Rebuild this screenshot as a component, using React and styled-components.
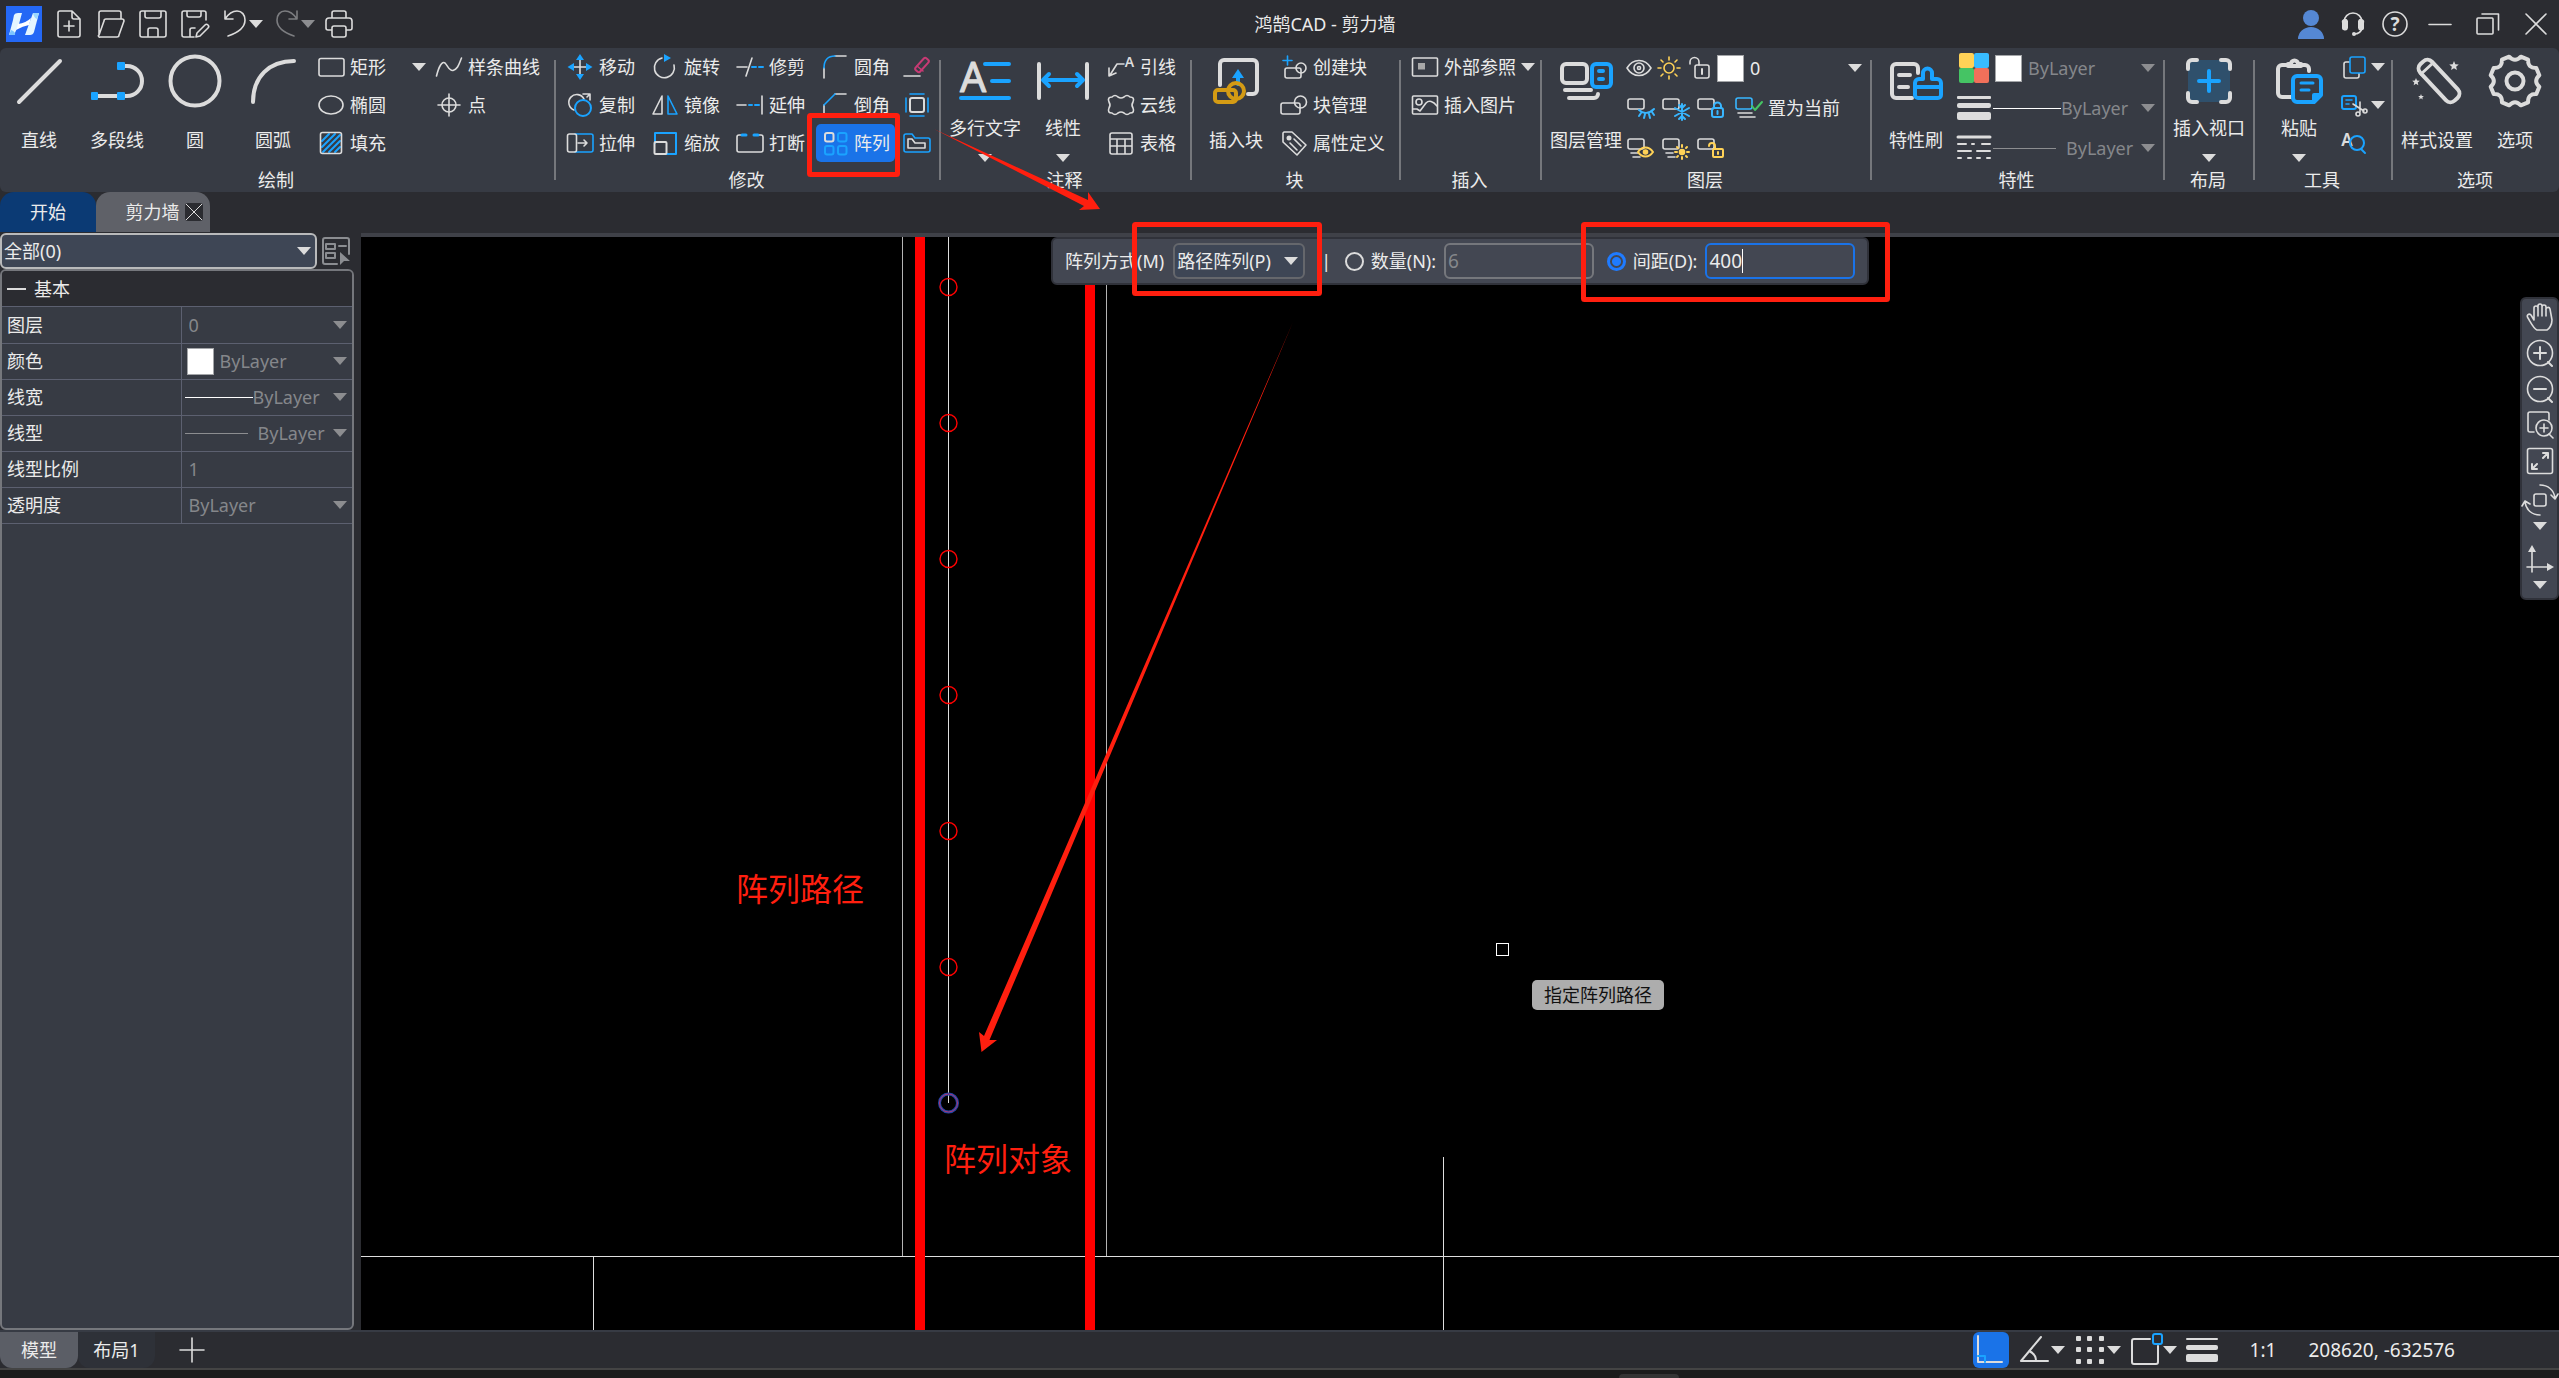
import styled, { createGlobalStyle } from 'styled-components';
import { useState } from 'react';

const light = '#dcdcdc';
const blue = '#1aa3ff';
const yellow = '#ffd257';
const sky = '#38b6ff';
const red = '#ff1f0f';

// ---------- icons, 28px ----------

const layerBox = <rect x="1" y="5" width="16" height="10" rx="2" />;
const layerLines = <path d="M4 19H11M6 23H13" />;

const small = {
    novo: <><path d="M17 1H5a2 2 0 0 0-2 2V25a2 2 0 0 0 2 2H23a2 2 0 0 0 2-2V9ZM17 1V7a2 2 0 0 0 2 2H25M14 11V21M9 16H19" /></>,
    abrir: <path d="M2 25V3a2 2 0 0 1 2-2H22a2 2 0 0 1 2 2V9M2 25L7 11a2 2 0 0 1 2-2H25a2 2 0 0 1 2 2L22 25a2 2 0 0 1-2 2H3a1 1 0 0 1-1-2Z" />,
    salvar: <path d="M3 1H25a2 2 0 0 1 2 2V25a2 2 0 0 1-2 2H3a2 2 0 0 1-2-2V3a2 2 0 0 1 2-2ZM6 1V6a2 2 0 0 0 2 2H20a2 2 0 0 0 2-2V1M9 27V20a2 2 0 0 1 2-2H17a2 2 0 0 1 2 2V27" />,
    salvarComo: <path d="M25 10V3a2 2 0 0 0-2-2H3a2 2 0 0 0-2 2V25a2 2 0 0 0 2 2H13M6 1V5a2 2 0 0 0 2 2H18a2 2 0 0 0 2-2V1M9 27V20a2 2 0 0 1 2-2H14M15 27L16 23L24 15a2 2 0 0 1 3 3L19 26Z" />,
    desfazer: <path d="M4 1V9H12M4 9C8 3 12 1 16 1C21 1 24 5 24 10C24 18 16 23 7 26" />,
    refazer: <path d="M24 1V9H16M24 9C20 3 16 1 12 1C7 1 4 5 4 10C4 18 12 23 21 26" stroke="#7c7d80" />,
    imprimir: <path d="M7 8V3a2 2 0 0 1 2-2H19a2 2 0 0 1 2 2V8M7 20H3a2 2 0 0 1-2-2V11a3 3 0 0 1 3-3H24a3 3 0 0 1 3 3V18a2 2 0 0 1-2 2H21M9 16H19a2 2 0 0 1 2 2V25a2 2 0 0 1-2 2H9a2 2 0 0 1-2-2V18a2 2 0 0 1 2-2Z" />,
    usuario: <g fill="#5588d4" stroke="none"><circle cx="14" cy="8" r="8" /><path d="M1 29a13 12 0 0 1 26 0Z" /></g>,
    fone: <><path d="M5 12a9 9 0 0 1 18 0M23 18C22 23 19 24 15 24" /><path d="M3 13a3 3 0 0 1 6-2V18a3 3 0 0 1-6-1ZM25 13a3 3 0 0 0-6-2V18a3 3 0 0 0 6-1Z" fill={light} stroke="none" /><circle cx="15" cy="24" r="2" fill={light} stroke="none" /></>,
    ajuda: <><circle cx="14" cy="14" r="12" /><text x="14" y="21" textAnchor="middle" fontSize="19" fontWeight="700" fill={light} stroke="none">?</text></>,
    minimizar: <path d="M3 14.5H25" />,
    restaurar: <><rect x="3" y="8" width="16" height="16" rx="1" /><path d="M8 4H24.500V20" /></>,
    fechar: <path d="M4 4L24 24M24 4L4 24" />,
    retangulo: <rect x="2" y="5.500" width="25" height="17.500" rx="2" />,
    elipse: <ellipse cx="14" cy="14" rx="12" ry="9" />,
    hachura: <><path d="M5 12L12 5M5 18L18 5M6 23L23 6M12 23L23 12M18 23L23 18" stroke={blue} strokeWidth="2" /><rect x="3.500" y="3.500" width="21" height="21" rx="2" /></>,
    spline: <path d="M1.500 23C4 13 7 8 10 10C13 13 14 18 18 17.500C23 16 24 11 26.500 5" />,
    ponto: <><circle cx="14" cy="14" r="7" /><path d="M14 3V25M3 14H25" /></>,
    mover: <><path d="M14 6V22M6 14H22" /><path d="M14 1L18 7H10ZM14 27L18 21H10ZM1.500 14L8 10V18ZM26.500 14L20 10V18Z" fill={blue} stroke="none" /></>,
    copiar: <><path d="M8 19A8 8 0 1 1 18 8M17 3H24V9M24 3L21 6" /><circle cx="17" cy="17" r="8" stroke={blue} strokeWidth="2" /></>,
    esticar: <><path d="M9 5H25a2 2 0 0 1 2 2V21a2 2 0 0 1-2 2H9" stroke={blue} /><rect x="1.500" y="5" width="9" height="18" rx="2" /><path d="M12 14H21M18 11L21 14L18 17" /></>,
    girar: <><path d="M11 5A10 10 0 1 0 23 12" /><path d="M13 1L20 5L13 9Z" fill={blue} stroke="none" /></>,
    espelhar: <><path d="M11 5V23H2Z" /><path d="M17 5V23H26Z" stroke={blue} /></>,
    escala: <><path d="M4 14V4H25V25H14" stroke={blue} strokeWidth="2" /><rect x="3.500" y="13" width="12" height="12" rx="1" strokeWidth="2" /></>,
    aparar: <><path d="M1 14H11M10 23L16 5" /><path d="M16 14H20M23 14H27" stroke={blue} strokeWidth="2" /></>,
    estender: <><path d="M1 14H10M26 5V23" /><path d="M13 14H16M19 14H23" stroke={blue} strokeWidth="2" /></>,
    quebrar: <><path d="M5 6H3a2 2 0 0 0-2 2V21a2 2 0 0 0 2 2H25a2 2 0 0 0 2-2V8a2 2 0 0 0-2-2H23" /><path d="M6 6H10M18 6H22" stroke={blue} strokeWidth="3" /></>,
    filete: <><path d="M3 15V25M14 3H25" /><path d="M3 15C3 7 7 3 14 3" stroke={blue} /></>,
    chanfro: <><path d="M3 14V25M14 3H25" /><path d="M3 14L14 3" stroke={blue} /></>,
    matriz: <><rect x="4" y="4" width="8.500" height="8.500" rx="2" strokeWidth="2" /><g stroke={blue} strokeWidth="2"><rect x="17" y="4" width="8.500" height="8.500" rx="2" /><rect x="4" y="17" width="8.500" height="8.500" rx="2" /><rect x="17" y="17" width="8.500" height="8.500" rx="2" /></g></>,
    apagar: <><rect x="16" y="4" width="6" height="16" rx="2" transform="rotate(42 19 12)" stroke="#c73a74" strokeWidth="2" /><path d="M14 13L20 18" stroke="#c73a74" /><path d="M1 23H17" /></>,
    caixa: <><rect x="7" y="7" width="14" height="14" rx="2" strokeWidth="2" /><path d="M7 3H21M7 25H21M3 7V21M25 7V21" stroke={blue} /></>,
    deslocar: <><path d="M3 5H9L12 9H25a2 2 0 0 1 2 2V21a2 2 0 0 1-2 2H3a2 2 0 0 1-2-2V7a2 2 0 0 1 2-2Z" stroke={blue} /><path d="M5 10H9L12 14H22V19H5Z" /></>,
    lider: <><path d="M3 22L10 11H17M2 15V23L9 20" /><text x="22.500" y="14" textAnchor="middle" fontSize="14" fontWeight="600" fill={light} stroke="none">A</text></>,
    nuvem: <path d="M5 6Q8 3 11 6Q14 8 17 6Q20 3 23 6Q28 6 26 11Q24 14 26 17Q28 22 23 22Q20 25 17 22Q14 20 11 22Q8 25 5 22Q0 22 2 17Q4 14 2 11Q0 6 5 6Z" />,
    tabela: <path d="M5 4H23a2 2 0 0 1 2 2V23a2 2 0 0 1-2 2H5a2 2 0 0 1-2-2V6a2 2 0 0 1 2-2ZM3 10H25M3 17H25M10 10V25M18 10V25" />,
    criarBloco: <><path d="M7.500 3V12M3 7.500H12" stroke={blue} /><rect x="5" y="15" width="16" height="10" rx="2" /><circle cx="21" cy="15" r="5" /></>,
    blocos: <><rect x="1" y="12" width="19" height="11" rx="2" /><circle cx="20.500" cy="11" r="6" /></>,
    etiqueta: <><path d="M4 3H12L26 16L17 26L3 13V4Z" /><circle cx="9" cy="9" r="2.500" fill={light} stroke="none" /><path d="M14 10L21 17M10 14L17 21" /></>,
    xref: <><rect x="1.500" y="5" width="25" height="18" rx="1" /><rect x="7" y="10" width="7" height="6.500" fill="#a8a8a8" stroke="none" /></>,
    imagem: <><rect x="1.500" y="5" width="25" height="18" rx="1" /><circle cx="8" cy="11" r="3" /><path d="M2 18H6L9 20L15 12C18 9 22 10 26 15" /></>,
    olho: <><path d="M2 14C8 4 20 4 26 14C20 24 8 24 2 14Z" /><circle cx="14" cy="14" r="5" /><circle cx="14" cy="14" r="1.500" /></>,
    sol: <g stroke={yellow}><circle cx="14" cy="14" r="5" /><path d="M14 3V6M14 22V25M3 14H6M22 14H25M6 6L8 8M20 20L22 22M22 6L20 8M8 20L6 22" /></g>,
    aberto: <><rect x="10" y="11" width="14" height="13" rx="2" /><path d="M17 15V20" strokeWidth="2" /><path d="M14 11V8a4 4 0 0 0-9 0V10" /></>,
    ocultar: <>{layerBox}<g stroke={sky} strokeWidth="2"><path d="M12 16C16 20 22 20 27 15M14 19L12 22M18 20L17 24M22 20L23 24M25 18L27 21" /></g></>,
    congelar: <>{layerBox}<path d="M20 10V26M13 14L27 22M27 14L13 22M17 11L20 14L23 11M17 25L20 22L23 25" stroke={sky} strokeWidth="2" /></>,
    bloquear: <>{layerBox}<g stroke={sky} strokeWidth="2"><rect x="15" y="14" width="11" height="9" rx="2" /><path d="M17 14V12a3 3 0 0 1 7 0V14M20.500 17V20" /></g></>,
    atual: <><rect x="1" y="4" width="16" height="11" rx="2" stroke={sky} /><path d="M3 19H17M5 23H20" /><path d="M17 12L20 16L27 8" stroke="#45c464" strokeWidth="2" /></>,
    mostrar: <>{layerBox}{layerLines}<g stroke={yellow}><path d="M11 18C15 12 22 12 26 18C22 24 15 24 11 18Z" strokeWidth="2" /><circle cx="18.500" cy="18" r="2" fill={yellow} /></g></>,
    descongelar: <>{layerBox}{layerLines}<g stroke={yellow}><circle cx="20" cy="18" r="2.500" fill={yellow} /><path d="M20 11V13M20 23V25M13 18H15M25 18H27M15 13L16 14M25 13L24 14M15 23L16 22M25 23L24 22" strokeWidth="2" /></g></>,
    desbloquear: <>{layerBox}<g stroke={yellow} strokeWidth="2"><rect x="16" y="15" width="10" height="8" rx="1" /><path d="M18 14V12a3 3 0 0 0-6 0M21 18V20" /></g></>,
    recortes: <><rect x="4" y="9" width="15" height="16" rx="2" /><rect x="10" y="4" width="15" height="16" rx="2" fill="#373b44" stroke={blue} /></>,
    tesoura: <><rect x="2" y="5" width="14" height="13" rx="2" stroke={blue} strokeWidth="2" /><path d="M6 9H12M6 13H9" stroke={blue} /><path d="M13 13L24 20M20 11L20 21" /><circle cx="18" cy="23" r="2" /><circle cx="25" cy="20" r="2" /></>,
    localizar: <><text x="7" y="17" textAnchor="middle" fontSize="17" fontWeight="600" fill={light} stroke="none">A</text><circle cx="17" cy="14" r="7" stroke={blue} strokeWidth="2" /><path d="M21 20L25 24" stroke={blue} strokeWidth="2" /></>,
    selecionar: <><path d="M27 17V3a2 2 0 0 0-2-2H3a2 2 0 0 0-2 2V25a2 2 0 0 0 2 2H15M4 7H13V12H4ZM4 16H13V21H4ZM17 9H24" stroke="#8b8d91" /><path d="M18 15L28 24L22 24L18 28Z" fill="#8b8d91" stroke="none" /></>,
    mao: <path d="M8 17V5a2 2 0 0 1 4 0V13M12 13V3a2 2 0 0 1 4 0V13M16 13V4a2 2 0 0 1 4 0V13M20 13V7a2 2 0 0 1 4-1L26 17C26 22 23 26 21 27H11C8 26 5 20 2 15C0 12 3 10 5 12L8 17" />,
    mais: <><circle cx="14" cy="14" r="12.500" /><path d="M14 8V20M8 14H20M22 23L26 27" strokeWidth="2" /></>,
    menos: <><circle cx="14" cy="14" r="12.500" /><path d="M8 14H20M22 23L26 27" strokeWidth="2" /></>,
    janela: <><path d="M23 9V3a2 2 0 0 0-2-2H4a2 2 0 0 0-2 2V19a2 2 0 0 0 2 2H8" /><circle cx="18" cy="17" r="8" /><path d="M18 13V21M14 17H22M23 23L27 27" /></>,
    tudo: <><rect x="1.500" y="1.500" width="25" height="25" rx="2" /><path d="M17 6H22V11M22 6L17 11M6 17V22H11M6 22L11 17" strokeWidth="2" /></>,
    orbita: <><rect x="8" y="8" width="12" height="12" rx="2" /><path d="M14-1C22-1 28 4 29 12M25 9L29 13L32 8M14 29C6 29 0 24-1 16M-4 20L-1 15L4 18" /></>,
    eixos: <><path d="M6 27V4M1 22H24" /><path d="M6 0L10 7H2ZM28 22L21 18V26Z" fill={light} stroke="none" /></>,
    orto: <><path d="M1 0V26H25" strokeWidth="2" /><path d="M1 20H8V26" stroke={blue} strokeWidth="2" /></>,
    polar: <path d="M21 1L1 25H28M9 15C14 17 16 20 16 25" strokeWidth="2" />,
    grade: <g fill={light} stroke="none">{[0, 11, 23].map(a => [0, 11, 23].map(b => <rect key={a + '-' + b} x={a} y={b} width="5" height="5" rx="1" />))}</g>,
    snap: <><path d="M18 3H2a2 2 0 0 0-2 2V26a2 2 0 0 0 2 2H24a2 2 0 0 0 2-2V10" strokeWidth="2" /><rect x="21" y="-2" width="9" height="10" rx="2" stroke={blue} strokeWidth="2" /></>,
    espessura: <g fill={light} stroke="none"><rect x="-2" y="2" width="32" height="2" rx="1" /><rect x="-2" y="9" width="32" height="5" rx="2" /><rect x="-2" y="18" width="32" height="8" rx="2" /></g>,
    linhas: <g fill={light} stroke="none"><rect x="-3" y="2" width="34" height="3" rx="1" /><rect x="-3" y="9" width="34" height="5" rx="2" /><rect x="-3" y="18" width="34" height="8" rx="2" /></g>,
    tracos: <g strokeWidth="3"><path d="M-2 3H30" /><path d="M-2 10H6M12 10H14M22 10H30M-2 17H11M17 17H30M-2 24H1M8 24H11M17 24H20M27 24H30" strokeWidth="2" /></g>,
    cores: <g stroke="none"><rect x="-1" y="-1" width="15" height="15" fill="#ffd257" rx="2" /><rect x="14" y="-1" width="15" height="15" fill="#38bcff" rx="2" /><rect x="-1" y="14" width="15" height="15" fill="#45c464" rx="2" /><rect x="14" y="14" width="15" height="15" fill="#f0705a" rx="2" /></g>,
    adicionar: <path d="M14 2V26M2 14H26" />,
};

// ---------- icons, 56px ----------

const star = (cx, cy, r) => {
    const pts = [];
    for (let i = 0; i < 10; i++) {
        const a = (Math.PI / 5) * i - Math.PI / 2;
        const d = i % 2 ? r * 0.45 : r;
        pts.push(`${cx + d * Math.cos(a)},${cy + d * Math.sin(a)}`);
    }
    return <polygon points={pts.join(' ')} fill={light} stroke="none" />;
};

const gear = () => {
    const p = (deg, r) => {
        const a = (deg * Math.PI) / 180;
        return `${28 + r * Math.cos(a)} ${28 + r * Math.sin(a)}`;
    };
    let d = `M${p(13.5, 25)}`;
    for (let i = 0; i < 8; i++) {
        const a = i * 45 + 22.5;
        d += `L${p(a - 9, 25)}L${p(a + 9, 25)}Q${p(a + 22.5, 18)} ${p(a + 36, 25)}`;
    }
    return d + 'Z';
};

const big = {
    linha: <path d="M8 49L49 8" />,
    polilinha: <><path d="M5 43H38A15 15 0 0 0 38 13H32" /><g fill={blue} stroke="none"><rect x="2" y="39" width="7" height="8" rx="1" /><rect x="28" y="39" width="8" height="8" rx="1" /><rect x="28" y="9" width="8" height="8" rx="1" /></g></>,
    circulo: <circle cx="28" cy="28" r="24.500" />,
    arco: <path d="M8 49C8 24 24 8 49 8" />,
    texto: <><text x="16" y="39" textAnchor="middle" fontSize="41" fill={light} strokeWidth="1">A</text><path d="M28 11H52M35 28H52M4 45H52" stroke={blue} /></>,
    linear: <><path d="M4 11V45M52 11V45" /><path d="M9 27H47M14 21L8 27L14 33M42 21L48 27L42 33" stroke={blue} /></>,
    inserirBloco: <><path d="M12 32V11a4 4 0 0 1 4-4H45a4 4 0 0 1 4 4V37a4 4 0 0 1-4 4H40" /><path d="M30 31V21" stroke={blue} /><path d="M30 16L36 25H24Z" fill={blue} stroke="none" /><g stroke="#d49b14"><rect x="7" y="37" width="21" height="12" rx="3" /><circle cx="28" cy="38" r="8" /></g></>,
    camadas: <><rect x="4" y="11" width="25" height="19" rx="4" /><path d="M7 37H33M11 45H36a4 4 0 0 0 4-4" /><g stroke={blue}><rect x="34" y="11" width="19" height="23" rx="4" /><path d="M41 18H45M41 26H45" /></g></>,
    pincel: <><path d="M24 45H8a4 4 0 0 1-4-4V15a4 4 0 0 1 4-4H26a4 4 0 0 1 4 4V20M11 22H22M11 34H20" /><path d="M27 34V30a4 4 0 0 1 4-4H35V20a4 4 0 0 1 9 0V26H49a4 4 0 0 1 4 4V42a3 3 0 0 1-3 3H30a3 3 0 0 1-3-3ZM27 34H53" stroke={blue} /></>,
    viewport: <><rect x="7" y="7" width="42" height="42" fill="#2f506c" stroke="none" /><path d="M7 16V11a4 4 0 0 1 4-4H16M40 7H45a4 4 0 0 1 4 4V16M49 40V45a4 4 0 0 1-4 4H40M16 49H11a4 4 0 0 1-4-4V40" /><path d="M28 18V38M18 28H38" stroke={blue} /></>,
    colar: <><path d="M16 12H11a4 4 0 0 0-4 4V40a4 4 0 0 0 4 4H20M30 12H34a4 4 0 0 1 4 4V18M17 13V11H20A3 3 0 0 1 27 11H30V13Z" /><g stroke={blue}><path d="M26 23H46a4 4 0 0 1 4 4V42L43 49H26a4 4 0 0 1-4-4V27a4 4 0 0 1 4-4ZM43 48V42H50" /><path d="M30 30H42M30 37H38" strokeWidth="3" /></g></>,
    varinha: <><rect x="22" y="3" width="16" height="50" rx="6" transform="rotate(-43 30 28)" /><path d="M12 21L24 10" strokeWidth="3" />{star(45, 13, 5)}{star(7, 29, 4)}{star(12, 44, 3)}</>,
    opcoes: <><path d={gear()} /><circle cx="28" cy="28" r="8.500" /></>,
};

function Icon({ name, stroke }) {
    return (
        <SmallSvg viewBox="0 0 28 28" aria-hidden="true" strokeWidth={stroke || 1.6}>{small[name]}</SmallSvg>
    )
}

function Caret({ dim }) {
    return (
        <CaretSvg viewBox="0 0 14 8" aria-hidden="true"><path d="M0 0H14L7 8Z" fill={dim ? '#8c8d90' : light} /></CaretSvg>
    )
}

function Big({ icon, text, menu, wide }) {
    return (
        <BigButton $menu={menu} $wide={wide}>
            <BigSvg viewBox="0 0 56 56" aria-hidden="true">{big[icon]}</BigSvg>
            <span>{text}</span>
            {menu && <Caret />}
        </BigButton>
    )
}

function Tool({ icon, text, active, menu }) {
    return (
        <ToolButton $active={active} aria-label={text || icon}>
            <Icon name={icon} />
            {text && <span>{text}</span>}
            {menu && <Caret />}
        </ToolButton>
    )
}

function Group({ title, width, flush, children }) {
    return (
        <GroupBox $width={width}>
            <GroupBody $flush={flush}>{children}</GroupBody>
            <GroupTitle>{title}</GroupTitle>
        </GroupBox>
    )
}

function Combo({ label, value, dim, preview }) {
    return (
        <ComboBox>
            {preview === 'color' && <Swatch />}
            {preview === 'solid' && <Preview />}
            {preview === 'thin' && <Preview $thin />}
            <select aria-label={label} data-dim={dim}><option>{value}</option></select>
            <Caret dim={dim} />
        </ComboBox>
    )
}

const modifyTools = [
    ['mover', '移动'], ['girar', '旋转'], ['aparar', '修剪'], ['filete', '圆角'], ['apagar'],
    ['copiar', '复制'], ['espelhar', '镜像'], ['estender', '延伸'], ['chanfro', '倒角'], ['caixa'],
    ['esticar', '拉伸'], ['escala', '缩放'], ['quebrar', '打断'], ['matriz', '阵列'], ['deslocar'],
];

const properties = [
    { name: '图层', value: '0', indent: true },
    { name: '颜色', value: 'ByLayer', preview: 'color' },
    { name: '线宽', value: 'ByLayer', preview: 'solid' },
    { name: '线型', value: 'ByLayer', preview: 'thin' },
    { name: '线型比例', value: '1', indent: true, plain: true },
    { name: '透明度', value: 'ByLayer', indent: true },
];

const circles = [50, 186, 322, 458, 594, 730];

function Ribbon() {
    return (
        <RibbonBar>
            <Group title="绘制" width={554} flush>
                <Big icon="linha" text="直线" />
                <Big icon="polilinha" text="多段线" />
                <Big icon="circulo" text="圆" />
                <Big icon="arco" text="圆弧" />
                <Column $width={118}>
                    <MenuRow>
                        <Tool icon="retangulo" text="矩形" />
                        <Caret />
                    </MenuRow>
                    <Tool icon="elipse" text="椭圆" />
                    <Tool icon="hachura" text="填充" />
                </Column>
                <Column>
                    <Tool icon="spline" text="样条曲线" />
                    <Tool icon="ponto" text="点" />
                </Column>
            </Group>
            <Divider />
            <Group title="修改" width={383}>
                <ModifyGrid>
                    {modifyTools.map(([icon, text]) => (
                        <Tool key={icon} icon={icon} text={text} active={icon === 'matriz'} />
                    ))}
                </ModifyGrid>
            </Group>
            <Divider />
            <Group title="注释" width={249}>
                <Big icon="texto" text="多行文字" menu />
                <Big icon="linear" text="线性" menu />
                <Column>
                    <Tool icon="lider" text="引线" />
                    <Tool icon="nuvem" text="云线" />
                    <Tool icon="tabela" text="表格" />
                </Column>
            </Group>
            <Divider />
            <Group title="块" width={207}>
                <Big icon="inserirBloco" text="插入块" />
                <Column>
                    <Tool icon="criarBloco" text="创建块" />
                    <Tool icon="blocos" text="块管理" />
                    <Tool icon="etiqueta" text="属性定义" />
                </Column>
            </Group>
            <Divider />
            <Group title="插入" width={139}>
                <Column>
                    <Tool icon="xref" text="外部参照" menu />
                    <Tool icon="imagem" text="插入图片" />
                </Column>
            </Group>
            <Divider />
            <Group title="图层" width={328}>
                <Big icon="camadas" text="图层管理" />
                <LayerRows>
                    <LayerRow>
                        <Icon name="olho" />
                        <Icon name="sol" />
                        <Icon name="aberto" />
                        <Combo label="图层" value="0" preview="color" />
                    </LayerRow>
                    <LayerRow $spaced>
                        <Icon name="ocultar" />
                        <Icon name="congelar" />
                        <Icon name="bloquear" />
                        <CurrentButton>
                            <Icon name="atual" />
                            <span>置为当前</span>
                        </CurrentButton>
                    </LayerRow>
                    <LayerRow $spaced>
                        <Icon name="mostrar" />
                        <Icon name="descongelar" />
                        <Icon name="desbloquear" />
                    </LayerRow>
                </LayerRows>
            </Group>
            <Divider />
            <Group title="特性" width={291}>
                <Big icon="pincel" text="特性刷" />
                <PropRows>
                    <PropRow><Icon name="cores" /><Combo label="颜色" value="ByLayer" preview="color" dim /></PropRow>
                    <PropRow><Icon name="linhas" /><Combo label="线宽" value="ByLayer" preview="solid" dim /></PropRow>
                    <PropRow><Icon name="tracos" /><Combo label="线型" value="ByLayer" preview="thin" dim /></PropRow>
                </PropRows>
            </Group>
            <Divider />
            <Group title="布局" width={88} flush>
                <Big icon="viewport" text="插入视口" menu wide />
            </Group>
            <Divider />
            <Group title="工具" width={136} flush>
                <Big icon="colar" text="粘贴" menu wide />
                <PasteColumn>
                    <ToolButton $tight aria-label="复制"><Icon name="recortes" /><Caret /></ToolButton>
                    <ToolButton $tight aria-label="剪切"><Icon name="tesoura" /><Caret /></ToolButton>
                    <ToolButton $tight aria-label="查找"><Icon name="localizar" /></ToolButton>
                </PasteColumn>
            </Group>
            <Divider />
            <Group title="选项">
                <Big icon="varinha" text="样式设置" />
                <Big icon="opcoes" text="选项" />
            </Group>
        </RibbonBar>
    )
}

function PropertyPanel() {
    return (
        <Side>
            <SideTop>
                <Filter>
                    <select aria-label="选择"><option>全部(0)</option></select>
                    <Caret />
                </Filter>
                <SelectButton aria-label="快速选择"><Icon name="selecionar" stroke={2} /></SelectButton>
            </SideTop>
            <Panel>
                <PanelTitle><i />基本</PanelTitle>
                <table>
                    <tbody>
                        {properties.map(p => (
                            <tr key={p.name}>
                                <th scope="row">{p.name}</th>
                                <td>
                                    <Cell $indent={p.indent}>
                                        {p.plain
                                            ? <input aria-label={p.name} defaultValue={p.value} />
                                            : <Combo label={p.name} value={p.value} preview={p.preview} dim />}
                                    </Cell>
                                </td>
                            </tr>
                        ))}
                    </tbody>
                </table>
            </Panel>
        </Side>
    )
}

export default function App() {
    const [mode, setMode] = useState('distance');
    const [count, setCount] = useState('6');
    const [distance, setDistance] = useState('400');

    return (
        <Page>
            <Global />
            <TitleBar>
                <Logo viewBox="0 0 36 36" aria-label="鸿鹄CAD">
                    <rect width="36" height="36" fill="#2468f5" />
                    <path d="M8 9Q9 7 12 7H16L13 18L8 29H3L7 14Z" fill="#e5f6ff" />
                    <path d="M27 7H33L28 26Q27 29 24 29H19L23 18Z" fill="#e5f6ff" />
                    <path d="M12 18Q20 17 25 12L23 19Q17 20 10 24Z" fill="#ffffff" />
                    <path d="M3 29L5 24Q10 26 9 29Z" fill="#7cc4ff" />
                    <path d="M27 7H33L31 13Q28 12 27 7Z" fill="#9ad7ff" />
                </Logo>
                <QuickBar>
                    <button aria-label="新建"><Icon name="novo" /></button>
                    <button aria-label="打开"><Icon name="abrir" /></button>
                    <button aria-label="保存"><Icon name="salvar" /></button>
                    <button aria-label="另存为"><Icon name="salvarComo" /></button>
                </QuickBar>
                <HistoryBar>
                    <button aria-label="撤销"><Icon name="desfazer" /><Caret /></button>
                    <button aria-label="重做"><Icon name="refazer" /><Caret dim /></button>
                    <button aria-label="打印"><Icon name="imprimir" /></button>
                </HistoryBar>
                <h1>鸿鹄CAD - 剪力墙</h1>
                <UserBar>
                    <button aria-label="用户"><Icon name="usuario" /></button>
                    <button aria-label="客服"><Icon name="fone" /></button>
                    <button aria-label="帮助"><Icon name="ajuda" /></button>
                </UserBar>
                <WindowBar>
                    <button aria-label="最小化"><Icon name="minimizar" /></button>
                    <button aria-label="还原"><Icon name="restaurar" /></button>
                    <button aria-label="关闭"><Icon name="fechar" /></button>
                </WindowBar>
            </TitleBar>

            <Ribbon />

            <Tabs>
                <Tab $color="#0b3a74" $width={96}>开始</Tab>
                <Tab $color="#5f6168" $width={114}>
                    剪力墙
                    <TabClose viewBox="0 0 18 18"><rect width="18" height="18" rx="3" fill="#2b2c31" /><path d="M1 1L17 17M17 1L1 17" stroke={light} /></TabClose>
                </Tab>
            </Tabs>

            <Work>
                <PropertyPanel />
                <Canvas>
                    <svg aria-hidden="true">
                        <path d="M541.500 0V1019M745.500 0V1019" stroke="#b4b4b4" fill="none" />
                        <path d="M587.500 0V866M0 1019.500H2198M232.500 1019V1093M1082.500 920V1093" stroke="#dedede" fill="none" />
                        <path d="M559 0V1093M729 0V1093" stroke="#ff0000" strokeWidth="10" fill="none" />
                        {circles.map(y => <circle key={y} cx="587.500" cy={y} r="8.500" stroke="#ff0000" strokeWidth="1.400" fill="none" />)}
                        <circle cx="587.500" cy="866" r="9" stroke="#2146a8" strokeWidth="3" fill="none" />
                        <circle cx="587.500" cy="866" r="9" stroke="#b0356f" fill="none" />
                        <rect x="1135.500" y="706.500" width="12" height="12" stroke="#ffffff" fill="none" />
                    </svg>
                    <Hint>指定阵列路径</Hint>
                    <ArrayBar>
                        <label htmlFor="way">阵列方式(M)</label>
                        <Way>
                            <select id="way"><option>路径阵列(P)</option></select>
                            <Caret />
                        </Way>
                        <Bar>|</Bar>
                        <input type="radio" id="byCount" name="mode" checked={mode === 'count'} onChange={() => setMode('count')} />
                        <label htmlFor="byCount">数量(N):</label>
                        <Field $off>
                            <input aria-label="数量" value={count} onChange={e => setCount(e.target.value)} />
                        </Field>
                        <input type="radio" id="byDistance" name="mode" checked={mode === 'distance'} onChange={() => setMode('distance')} />
                        <label htmlFor="byDistance">间距(D):</label>
                        <Field>
                            <input aria-label="间距" size="3" value={distance} onChange={e => setDistance(e.target.value)} />
                            <i />
                        </Field>
                    </ArrayBar>
                    <ViewBar>
                        <button aria-label="平移"><Icon name="mao" /></button>
                        <button aria-label="放大"><Icon name="mais" /></button>
                        <button aria-label="缩小"><Icon name="menos" /></button>
                        <button aria-label="窗口缩放"><Icon name="janela" /></button>
                        <button aria-label="全部"><Icon name="tudo" /></button>
                        <button aria-label="动态观察" data-menu="true"><Icon name="orbita" /><Caret /></button>
                        <button aria-label="坐标系" data-menu="true"><Icon name="eixos" /><Caret /></button>
                    </ViewBar>
                </Canvas>
            </Work>

            <Status>
                <Sheet $active>模型</Sheet>
                <Sheet>布局1</Sheet>
                <AddSheet aria-label="新建布局"><Icon name="adicionar" /></AddSheet>
                <StatusTools>
                    <OrthoButton aria-label="正交"><Icon name="orto" /></OrthoButton>
                    <button aria-label="极轴"><Icon name="polar" /><Caret /></button>
                    <button aria-label="栅格"><Icon name="grade" /><Caret /></button>
                    <button aria-label="捕捉"><Icon name="snap" /><Caret /></button>
                    <button aria-label="线宽"><Icon name="espessura" /></button>
                </StatusTools>
                <Scale>1:1</Scale>
                <Coords>208620, -632576</Coords>
            </Status>
            <Taskbar><i /></Taskbar>

            {/* tutorial marks over the whole window */}
            <Marks aria-hidden="true">
                <g fill="none" stroke={red} strokeWidth="5">
                    <rect x="809.500" y="115.500" width="88" height="59" rx="1" />
                    <rect x="1134.500" y="224.500" width="185" height="69" rx="1" />
                    <rect x="1583.500" y="224.500" width="304" height="75" rx="1" />
                </g>
                <g fill={red}>
                    <path d="M934 129L1088 200L1088 192L1100 209L1079 210L1084 206Z" />
                    <path d="M1293 322L1049 900L989.500 1040L997 1040L981.500 1052L979 1032L984 1036L1043 900Z" />
                    <text x="736" y="901">阵列路径</text>
                    <text x="944" y="1171">阵列对象</text>
                </g>
            </Marks>
        </Page>
    )
}

// styled components
const Global = createGlobalStyle`
    *{
        box-sizing: border-box;
    }
    body{
        margin: 0;
        background-color: #2b2c31;
    }
    body, button, input, select{
        font-family: 'Noto Sans', 'Noto Sans CJK SC', sans-serif;
        font-size: 18px;
        line-height: 24px;
        color: #ebebeb;
    }
    button{
        padding: 0;
        border: none;
        background: none;
        white-space: nowrap;
    }
    select, input{
        appearance: none;
        padding: 0;
        border: none;
        outline: none;
        border-radius: 0;
        background: none;
        min-width: 0;
    }
`;

const Page = styled.div`
    position: relative;
    display: flex;
    flex-direction: column;
    min-height: 100vh;
    overflow: hidden;
`;

const SmallSvg = styled.svg`
    flex: none;
    display: block;
    width: 28px;
    height: 28px;
    overflow: visible;
    fill: none;
    stroke: ${light};
    stroke-linecap: round;
    stroke-linejoin: round;
`;

const BigSvg = styled.svg`
    display: block;
    width: 56px;
    height: 56px;
    overflow: visible;
    fill: none;
    stroke: ${light};
    stroke-width: 4px;
    stroke-linecap: round;
    stroke-linejoin: round;
`;

const CaretSvg = styled.svg`
    flex: none;
    display: block;
    width: 14px;
    height: 8px;
    pointer-events: none;
`;

const TitleBar = styled.header`
    display: flex;
    align-items: center;
    height: 48px;
    padding: 0 9px 0 6px;
    button{
        display: flex;
        align-items: center;
    }
    h1{
        flex: 1;
        margin: 0;
        font-size: 18px;
        font-weight: 400;
        text-align: center;
    }
`;

const Logo = styled.svg`
    width: 36px;
    height: 36px;
`;

const QuickBar = styled.div`
    display: flex;
    gap: 14px;
    margin-left: 13px;
`;

const HistoryBar = styled.div`
    display: flex;
    gap: 10px;
    margin-left: 12px;
`;

const UserBar = styled.div`
    display: flex;
    gap: 14px;
`;

const WindowBar = styled.div`
    display: flex;
    gap: 20px;
    margin-left: 17px;
`;

const RibbonBar = styled.nav`
    display: flex;
    align-items: center;
    height: 144px;
    border-radius: 6px;
    background-color: #373b44;
`;

const Divider = styled.div`
    flex: none;
    width: 2px;
    height: 120px;
    background-color: #75777c;
`;

const GroupBox = styled.section`
    display: flex;
    flex-direction: column;
    flex: ${props => (props.$width ? 'none' : 1)};
    width: ${props => (props.$width ? props.$width + 'px' : 'auto')};
    height: 144px;
`;

const GroupBody = styled.div`
    display: flex;
    height: 120px;
    padding-left: ${props => (props.$flush ? 0 : 5)}px;
`;

const GroupTitle = styled.div`
    padding-right: 2px;
    text-align: center;
`;

const BigButton = styled.button`
    flex: none;
    display: flex;
    flex-direction: column;
    align-items: center;
    width: ${props => (props.$wide ? 88 : 78)}px;
    padding-top: 5px;
    span{
        margin: ${props => (props.$menu ? '7px 0 14px' : '19px 0 0')};
    }
`;

const Column = styled.div`
    display: flex;
    flex-direction: column;
    align-items: flex-start;
    width: ${props => (props.$width ? props.$width + 'px' : 'auto')};
`;

const PasteColumn = styled(Column)`
    margin-left: -3px;
`;

const MenuRow = styled.div`
    display: flex;
    align-items: center;
    justify-content: space-between;
    width: 114px;
`;

const ToolButton = styled.button`
    display: flex;
    align-items: center;
    gap: ${props => (props.$tight ? 3 : 5)}px;
    height: 38px;
    padding: 0 ${props => (props.$tight ? 0 : 5)}px;
    border-radius: 5px;
    background-color: ${props => (props.$active ? '#1a73e8' : 'transparent')};
`;

const CurrentButton = styled(ToolButton)`
    padding: 0 3px;
`;

const ModifyGrid = styled.div`
    display: grid;
    grid-template-columns: repeat(4, 85px) 32px;
    grid-auto-rows: 38px;
    justify-items: start;
    > :nth-child(5n){
        padding: 0 2px;
    }
`;

const LayerRows = styled.div`
    flex: 1;
    padding-right: 8px;
`;

const LayerRow = styled.div`
    display: flex;
    align-items: center;
    gap: ${props => (props.$spaced ? 7 : 2)}px;
    height: 40px;
    padding-left: ${props => (props.$spaced ? 2 : 0)}px;
`;

const PropRows = styled.div`
    flex: 1;
    padding-right: 8px;
`;

const PropRow = styled.div`
    display: flex;
    align-items: center;
    gap: 5px;
    height: 40px;
    padding-left: 5px;
`;

const ComboBox = styled.div`
    flex: 1;
    display: flex;
    align-items: center;
    min-width: 0;
    select{
        flex: 1;
    }
    select[data-dim='true']{
        color: #85878b;
    }
`;

const Swatch = styled.span`
    flex: none;
    width: 27px;
    height: 27px;
    margin: 0 6px 0 2px;
    border: 1px solid #a3a5a8;
    background-color: #ffffff;
`;

const Preview = styled.span`
    flex: none;
    width: ${props => (props.$thin ? 63 : 68)}px;
    height: 1px;
    margin-right: ${props => (props.$thin ? 10 : 0)}px;
    background-color: ${props => (props.$thin ? '#8c8d90' : '#ffffff')};
`;

const Tabs = styled.div`
    display: flex;
    height: 41px;
`;

const Tab = styled.button`
    display: flex;
    align-items: center;
    justify-content: center;
    gap: 5px;
    width: ${props => props.$width}px;
    height: 40px;
    padding-left: ${props => (props.$width > 100 ? 22 : 0)}px;
    border-radius: 14px 14px 0 0;
    background-color: ${props => props.$color};
`;

const TabClose = styled.svg`
    width: 18px;
    height: 18px;
`;

const Work = styled.main`
    flex: 1;
    display: flex;
`;

const Side = styled.aside`
    flex: none;
    display: flex;
    flex-direction: column;
    width: 361px;
    padding-right: 7px;
`;

const SideTop = styled.div`
    display: flex;
    align-items: center;
    gap: 3px;
    height: 36px;
`;

const Filter = styled.div`
    display: flex;
    align-items: center;
    width: 317px;
    height: 36px;
    padding: 0 4px 0 2px;
    border: 2px solid #b9babb;
    border-radius: 6px;
    background-color: #3e4655;
    select{
        flex: 1;
    }
`;

const SelectButton = styled.button`
    display: flex;
    align-items: center;
    justify-content: center;
    width: 32px;
    height: 36px;
`;

const Panel = styled.div`
    flex: 1;
    border: 2px solid #75777c;
    border-radius: 6px;
    background-color: #373b44;
    overflow: hidden;
    table{
        width: 100%;
        table-layout: fixed;
        border-spacing: 0;
        border-collapse: collapse;
    }
    th, td{
        height: 36px;
        padding: 0;
        border-bottom: 1px solid #5c6070;
    }
    th{
        width: 179px;
        padding-left: 5px;
        border-right: 1px solid #5c6070;
        font-weight: 400;
        text-align: left;
    }
`;

const PanelTitle = styled.div`
    display: flex;
    align-items: center;
    gap: 8px;
    height: 36px;
    padding-left: 5px;
    border-bottom: 1px solid #5c6070;
    background-color: #2b2c31;
    i{
        width: 19px;
        height: 2px;
        background-color: ${light};
    }
`;

const Cell = styled.div`
    display: flex;
    align-items: center;
    padding: 0 5px 0 ${props => (props.$indent ? 7 : 3)}px;
    input{
        width: 100%;
        color: #85878b;
    }
`;

const Canvas = styled.div`
    position: relative;
    flex: 1;
    border-top: 4px solid #3f4148;
    background-color: #000000;
    overflow: hidden;
    > svg{
        position: absolute;
        top: 0;
        left: 0;
        width: 100%;
        height: 100%;
    }
`;

const Hint = styled.div`
    position: absolute;
    top: 743px;
    left: 1171px;
    padding: 3px 12px;
    border-radius: 5px;
    background-color: #adadad;
    color: #111111;
`;

const ArrayBar = styled.form`
    position: absolute;
    top: 0;
    left: 690px;
    display: flex;
    align-items: center;
    width: 818px;
    height: 48px;
    padding: 0 12px;
    border: 2px solid #30323a;
    border-radius: 6px;
    background-color: #434752;
    white-space: nowrap;
    input[type='radio']{
        flex: none;
        width: 19px;
        height: 19px;
        margin: 0 7px 0 13px;
        border: 2px solid ${light};
        border-radius: 50%;
    }
    input[type='radio']:checked{
        border: 3px solid #1f7bff;
        background: radial-gradient(circle, #1f7bff 4px, transparent 5px);
    }
`;

const Way = styled.div`
    display: flex;
    align-items: center;
    width: 132px;
    height: 36px;
    margin-left: 9px;
    padding: 0 5px 0 2px;
    border: 2px solid #65676c;
    border-radius: 6px;
    background-color: #3e4655;
    select{
        flex: 1;
    }
`;

const Bar = styled.span`
    width: 11px;
    margin-left: 16px;
    text-align: center;
`;

const Field = styled.div`
    display: flex;
    align-items: center;
    width: 150px;
    height: 36px;
    margin-left: 8px;
    padding-left: 2px;
    border: 2px solid ${props => (props.$off ? '#75777c' : '#1a73e8')};
    border-radius: 6px;
    input{
        width: ${props => (props.$off ? '100%' : '33px')};
        font-size: 19px;
        color: ${props => (props.$off ? '#85878b' : '#ebebeb')};
    }
    i{
        width: 1px;
        height: 24px;
        background-color: #ffffff;
    }
`;

const ViewBar = styled.div`
    position: absolute;
    top: 60px;
    right: 0;
    display: flex;
    flex-direction: column;
    align-items: center;
    gap: 8px;
    width: 39px;
    padding: 4px 0 5px;
    border: 2px solid #30323a;
    border-radius: 6px;
    background-color: #434752;
    button{
        display: flex;
        flex-direction: column;
        align-items: center;
    }
    button[data-menu]{
        gap: 8px;
        padding: 3px 0 4px;
    }
`;

const Status = styled.footer`
    display: flex;
    align-items: center;
    height: 40px;
    padding-right: 104px;
    border-top: 2px solid #373b44;
    border-bottom: 2px solid #444444;
    font-size: 19px;
`;

const Sheet = styled.button`
    height: 36px;
    width: ${props => (props.$active ? 78 : 77)}px;
    border-radius: 0 0 12px 12px;
    background-color: ${props => (props.$active ? '#5b5e66' : '#2e3138')};
`;

const AddSheet = styled.button`
    margin-left: 23px;
`;

const StatusTools = styled.div`
    display: flex;
    align-items: center;
    gap: 11px;
    margin-left: auto;
    button{
        display: flex;
        align-items: center;
        gap: 3px;
    }
`;

const OrthoButton = styled.button`
    justify-content: center;
    width: 36px;
    height: 36px;
    border-radius: 6px;
    background-color: #1a73e8;
`;

const Scale = styled.span`
    margin-left: 34px;
`;

const Coords = styled.span`
    margin-left: 32px;
`;

const Taskbar = styled.div`
    display: flex;
    align-items: flex-end;
    justify-content: center;
    height: 8px;
    padding-left: 738px;
    background-color: #1c1c1c;
    i{
        width: 60px;
        height: 4px;
        border-radius: 4px 4px 0 0;
        background-color: #343434;
    }
`;

const Marks = styled.svg`
    position: absolute;
    top: 0;
    left: 0;
    width: 100%;
    height: 100%;
    pointer-events: none;
    text{
        font-family: 'Noto Sans CJK SC', sans-serif;
        font-size: 32px;
    }
`;
